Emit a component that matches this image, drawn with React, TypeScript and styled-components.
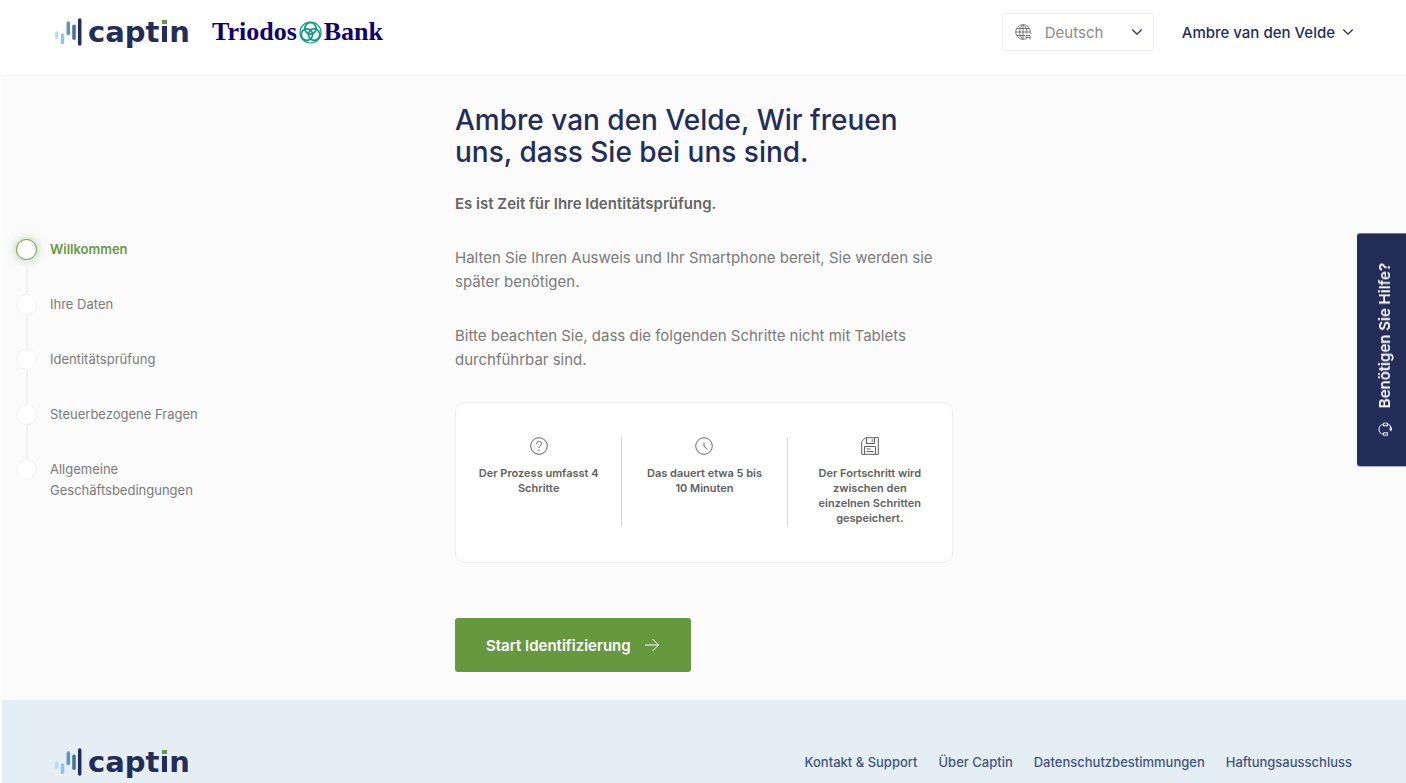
import React from 'react';
import styled, { createGlobalStyle, css } from 'styled-components';

const navy = '#232d57';
const green = '#66993f';
const grey = '#7a7a7a';

const GlobalStyle = createGlobalStyle`
  *, *::before, *::after { box-sizing: border-box; }
  body {
    margin: 0;
    background: #ffffff;
    color: ${grey};
    font-family: Inter, "Liberation Sans", sans-serif;
    font-size: 15px;
    line-height: 24px;
  }
  button, select { font-family: inherit; }
`;

const Page = styled.div`
  display: flex;
  flex-direction: column;
  min-height: 100vh;
  padding-left: 2px;
`;

const Header = styled.header`
  display: flex;
  flex-wrap: wrap;
  justify-content: space-between;
  gap: 12px 24px;
  padding: 13px 52px 24px;
  border-bottom: 1px solid #f2f2f2;
`;

const Group = styled.div<{ $gap: number }>`
  display: flex;
  align-items: center;
  gap: ${(p) => p.$gap}px;
`;

const LogoLink = styled.a`
  display: flex;
  align-items: center;
  gap: 5px;
  color: ${navy};
  text-decoration: none;
`;

const Wordmark = styled.span`
  font-family: "DejaVu Sans", sans-serif;
  font-size: 29px;
  font-weight: 700;
  line-height: 28px;
`;

const DottedI = styled.span`
  background: linear-gradient(${green} 0 10px, ${navy} 10px);
  background-clip: text;
  -webkit-background-clip: text;
  color: transparent;
`;

const BankLogo = styled.span`
  display: flex;
  align-items: center;
  gap: 2px;
  color: #10006e;
  font-family: "Liberation Serif", serif;
  font-size: 26px;
  font-weight: 700;
  line-height: 28px;
`;

const SelectBox = styled.label`
  display: grid;
  grid-template-columns: 16px 1fr 12px;
  align-items: center;
  gap: 14px;
  width: 152px;
  height: 38px;
  padding: 0 10px 0 12px;
  border: 1px solid #efefef;
  border-radius: 3px;
  color: ${navy};
`;

const LanguageSelect = styled.select`
  grid-area: 1 / 1 / 2 / 4;
  width: 100%;
  height: 36px;
  padding: 0 0 0 30px;
  border: 0;
  background: transparent;
  appearance: none;
  color: #8a8a8a;
  font-size: 15px;
`;

const IconSlot = styled.span<{ $column: number }>`
  grid-area: 1 / ${(p) => p.$column};
  display: flex;
  pointer-events: none;
`;

const UserButton = styled.button`
  display: flex;
  align-items: center;
  gap: 7px;
  padding: 0;
  border: 0;
  background: none;
  color: ${navy};
  font-size: 15px;
  font-weight: 500;
`;

const Body = styled.div`
  flex: 1;
  display: grid;
  grid-template-columns: 1fr minmax(0, 498px) 1fr;
  background: #fbfbfb;

  @media (max-width: 960px) {
    grid-template-columns: 1fr;
    padding: 0 24px;
  }
`;

const Steps = styled.ol`
  margin: 0;
  padding: 163px 0 24px 14px;
  list-style: none;

  @media (max-width: 960px) {
    padding: 24px 0 0;
  }
`;

const Step = styled.li<{ $active?: boolean }>`
  display: grid;
  grid-template-columns: 21px 160px;
  column-gap: 13px;
  min-height: 55px;
  color: ${grey};
  font-size: 13px;
  line-height: 21px;

  ${(p) =>
    p.$active &&
    css`
      color: ${green};
      font-weight: 600;
    `}
`;

const StepMarker = styled.span<{ $active?: boolean }>`
  display: flex;
  flex-direction: column;
  align-items: center;

  &::before {
    content: '';
    width: 21px;
    height: 21px;
    border: 1px solid ${(p) => (p.$active ? green : '#f1f1f1')};
    border-radius: 50%;
    background: #ffffff;
    box-shadow: ${(p) => (p.$active ? '0 0 10px rgba(102, 153, 63, 0.5)' : 'none')};
  }

  &::after {
    content: '';
    flex: 1;
    width: 2px;
    background: #f0f0f0;
  }

  li:last-child > &::after {
    display: none;
  }
`;

const Content = styled.main`
  padding: 28px 0;
`;

const Title = styled.h1`
  margin: 0 0 24px;
  color: ${navy};
  font-size: 28px;
  font-weight: 500;
  line-height: 32px;
`;

const Paragraph = styled.p<{ $strong?: boolean }>`
  margin: 0 0 30px;
  font-weight: ${(p) => (p.$strong ? 600 : 400)};
  color: ${(p) => (p.$strong ? '#666666' : grey)};
`;

const Card = styled.ul`
  display: grid;
  grid-template-columns: repeat(3, 1fr);
  margin: 0 0 55px;
  padding: 34px 0 36px;
  border: 1px solid #efefef;
  border-radius: 10px;
  background: #ffffff;
  list-style: none;
`;

const Fact = styled.li`
  display: flex;
  flex-direction: column;
  align-items: center;
  gap: 11px;
  padding: 0 20px;
  color: #606060;
  font-size: 11px;
  font-weight: 600;
  line-height: 15px;
  text-align: center;

  & + & {
    border-left: 1px solid #d4d4d4;
  }
`;

const StartButton = styled.button`
  display: flex;
  align-items: center;
  gap: 13px;
  height: 54px;
  padding: 0 31px;
  border: 0;
  border-radius: 3px;
  background: ${green};
  color: #ffffff;
  font-size: 15px;
  font-weight: 600;
`;

const HelpTab = styled.button`
  position: fixed;
  top: 233px;
  right: 0;
  display: flex;
  align-items: center;
  gap: 14px;
  width: 49px;
  padding: 30px 7px 30px 0;
  border: 0;
  border-radius: 0 3px 3px 0;
  background: ${navy};
  color: #ffffff;
  font-size: 15px;
  font-weight: 600;
  line-height: 20px;
  writing-mode: vertical-rl;
  transform: rotate(180deg);
`;

const HelpIcon = styled.span`
  display: flex;
  transform: rotate(90deg);
`;

const Footer = styled.footer`
  display: flex;
  flex-wrap: wrap;
  align-items: center;
  justify-content: space-between;
  gap: 12px 24px;
  padding: 48px 54px 7px 52px;
  background: #e6eef5;
`;

const FooterNav = styled.nav`
  display: flex;
  flex-wrap: wrap;
  gap: 0 21px;
`;

const FooterLink = styled.a`
  color: #42557c;
  font-size: 13px;
  font-weight: 500;
  text-decoration: none;
`;

const CaptinLogo = () => (
  <LogoLink href="#" aria-label="captin">
    <svg width="29" height="28" viewBox="0 0 29 28" strokeWidth="3.5" strokeLinecap="round">
      <path d="M2.700 15v4.500" stroke="#b9dcf1" />
      <path d="M8.500 17v7.500" stroke="#8ec5e4" />
      <path d="M14.300 5v10.500" stroke="#6294c0" />
      <path d="M20 8.300v12" stroke="#48708f" />
      <path d="M25.700 2v24" stroke={navy} />
    </svg>
    <Wordmark>
      capt<DottedI>i</DottedI>n
    </Wordmark>
  </LogoLink>
);

const Chevron = () => (
  <svg width="12" height="12" viewBox="0 0 12 12" fill="none" stroke="currentColor" strokeWidth="1.3">
    <path d="M1.300 3.500 6 8.200l4.700-4.700" />
  </svg>
);

const Rings = () => (
  <svg width="23" height="23" viewBox="0 0 23 23" fill="none" stroke="#0f9b82">
    <circle cx="11.500" cy="11.500" r="10.500" strokeWidth="1.200" />
    <circle cx="11.500" cy="7.400" r="5.700" strokeWidth="1.700" />
    <circle cx="7.900" cy="13.600" r="5.700" strokeWidth="1.700" />
    <circle cx="15.100" cy="13.600" r="5.700" strokeWidth="1.700" />
  </svg>
);

const Globe = () => (
  <svg width="16" height="16" viewBox="0 0 16 16" fill="none" stroke="#777777" strokeWidth="1">
    <path d="M10 15a7.300 7.300 0 1 1 5.300-7v2" />
    <path d="M8 .7v14.600M.7 8h14.600M2 4.500h12M2 11.500h8M8 .7C3.500 4.500 3.500 11.500 8 15.300M8 .7c3.500 2.500 4 5.500 3.800 9" />
    <path d="M11 15.500v-4h4v4M11 13.500h4" />
  </svg>
);

const QuestionIcon = () => (
  <svg width="18" height="18" viewBox="0 0 18 18" fill="none" stroke="#5f5f5f">
    <circle cx="9" cy="9" r="8.300" />
    <path d="M6.500 6.900C6.500 3.500 11.600 3.600 11.500 6.700 11.400 8.700 9 8.600 9 11M9 12.700v1.500" />
  </svg>
);

const ClockIcon = () => (
  <svg width="18" height="18" viewBox="0 0 18 18" fill="none" stroke="#6b6b6b">
    <circle cx="9" cy="9" r="8.300" />
    <path d="M9 5.500V9l3.300 3.500" />
  </svg>
);

const DiskIcon = () => (
  <svg width="18" height="18" viewBox="0 0 18 18" fill="none" stroke="#5f5f5f">
    <path d="M4.500.7h12.800v16.600H.7V4.500zM5.500.7v5.800h8V.7M11.200 2.200v2.600M3.500 17.300V9.500h11v7.800M5.500 12h4M5.500 14.500h7" />
  </svg>
);

const Arrow = () => (
  <svg width="16" height="14" viewBox="0 0 16 14" fill="none" stroke="#ffffff" strokeWidth="1">
    <path d="M1 7h13.500M8.500 1l6 6-6 6" />
  </svg>
);

const Headset = () => (
  <svg width="14" height="14" viewBox="0 0 14 14" fill="none" stroke="#ffffff" strokeWidth="1">
    <path d="M2 6C2 -.8 12 -.8 12 6M2.500 5.500H1v4h2.500v-4zM11.500 5.500H13v4h-2.500v-4zM12 9.500c0 2-1.500 3-3.500 3.300M6 12h2.500v1.500H6z" />
  </svg>
);

const steps = [
  'Willkommen',
  'Ihre Daten',
  'Identitätsprüfung',
  'Steuerbezogene Fragen',
  'Allgemeine Geschäftsbedingungen',
];

const facts = [
  { icon: <QuestionIcon />, text: 'Der Prozess umfasst 4 Schritte' },
  { icon: <ClockIcon />, text: 'Das dauert etwa 5 bis 10 Minuten' },
  { icon: <DiskIcon />, text: 'Der Fortschritt wird zwischen den einzelnen Schritten gespeichert.' },
];

const footerLinks = ['Kontakt & Support', 'Über Captin', 'Datenschutzbestimmungen', 'Haftungsausschluss'];

export default function App() {
  return (
    <>
      <GlobalStyle />
      <Page>
        <Header>
          <Group $gap={22}>
            <CaptinLogo />
            <BankLogo>
              Triodos
              <Rings />
              Bank
            </BankLogo>
          </Group>
          <Group $gap={28}>
            <SelectBox>
              <IconSlot $column={1}>
                <Globe />
              </IconSlot>
              <LanguageSelect aria-label="Sprache" defaultValue="de">
                <option value="de">Deutsch</option>
              </LanguageSelect>
              <IconSlot $column={3}>
                <Chevron />
              </IconSlot>
            </SelectBox>
            <UserButton type="button">
              Ambre van den Velde
              <Chevron />
            </UserButton>
          </Group>
        </Header>

        <Body>
          <Steps>
            {steps.map((label, index) => (
              <Step key={label} $active={index === 0}>
                <StepMarker $active={index === 0} />
                <span>{label}</span>
              </Step>
            ))}
          </Steps>
          <Content>
            <Title>Ambre van den Velde, Wir freuen uns, dass Sie bei uns sind.</Title>
            <Paragraph $strong>Es ist Zeit für Ihre Identitätsprüfung.</Paragraph>
            <Paragraph>
              Halten Sie Ihren Ausweis und Ihr Smartphone bereit, Sie werden sie später benötigen.
            </Paragraph>
            <Paragraph>
              Bitte beachten Sie, dass die folgenden Schritte nicht mit Tablets durchführbar sind.
            </Paragraph>
            <Card>
              {facts.map((fact) => (
                <Fact key={fact.text}>
                  {fact.icon}
                  <span>{fact.text}</span>
                </Fact>
              ))}
            </Card>
            <StartButton type="button">
              Start Identifizierung
              <Arrow />
            </StartButton>
          </Content>
        </Body>

        <Footer>
          <CaptinLogo />
          <FooterNav>
            {footerLinks.map((label) => (
              <FooterLink key={label} href="#">
                {label}
              </FooterLink>
            ))}
          </FooterNav>
        </Footer>
      </Page>
      <HelpTab type="button">
        <HelpIcon>
          <Headset />
        </HelpIcon>
        Benötigen Sie Hilfe?
      </HelpTab>
    </>
  );
}
